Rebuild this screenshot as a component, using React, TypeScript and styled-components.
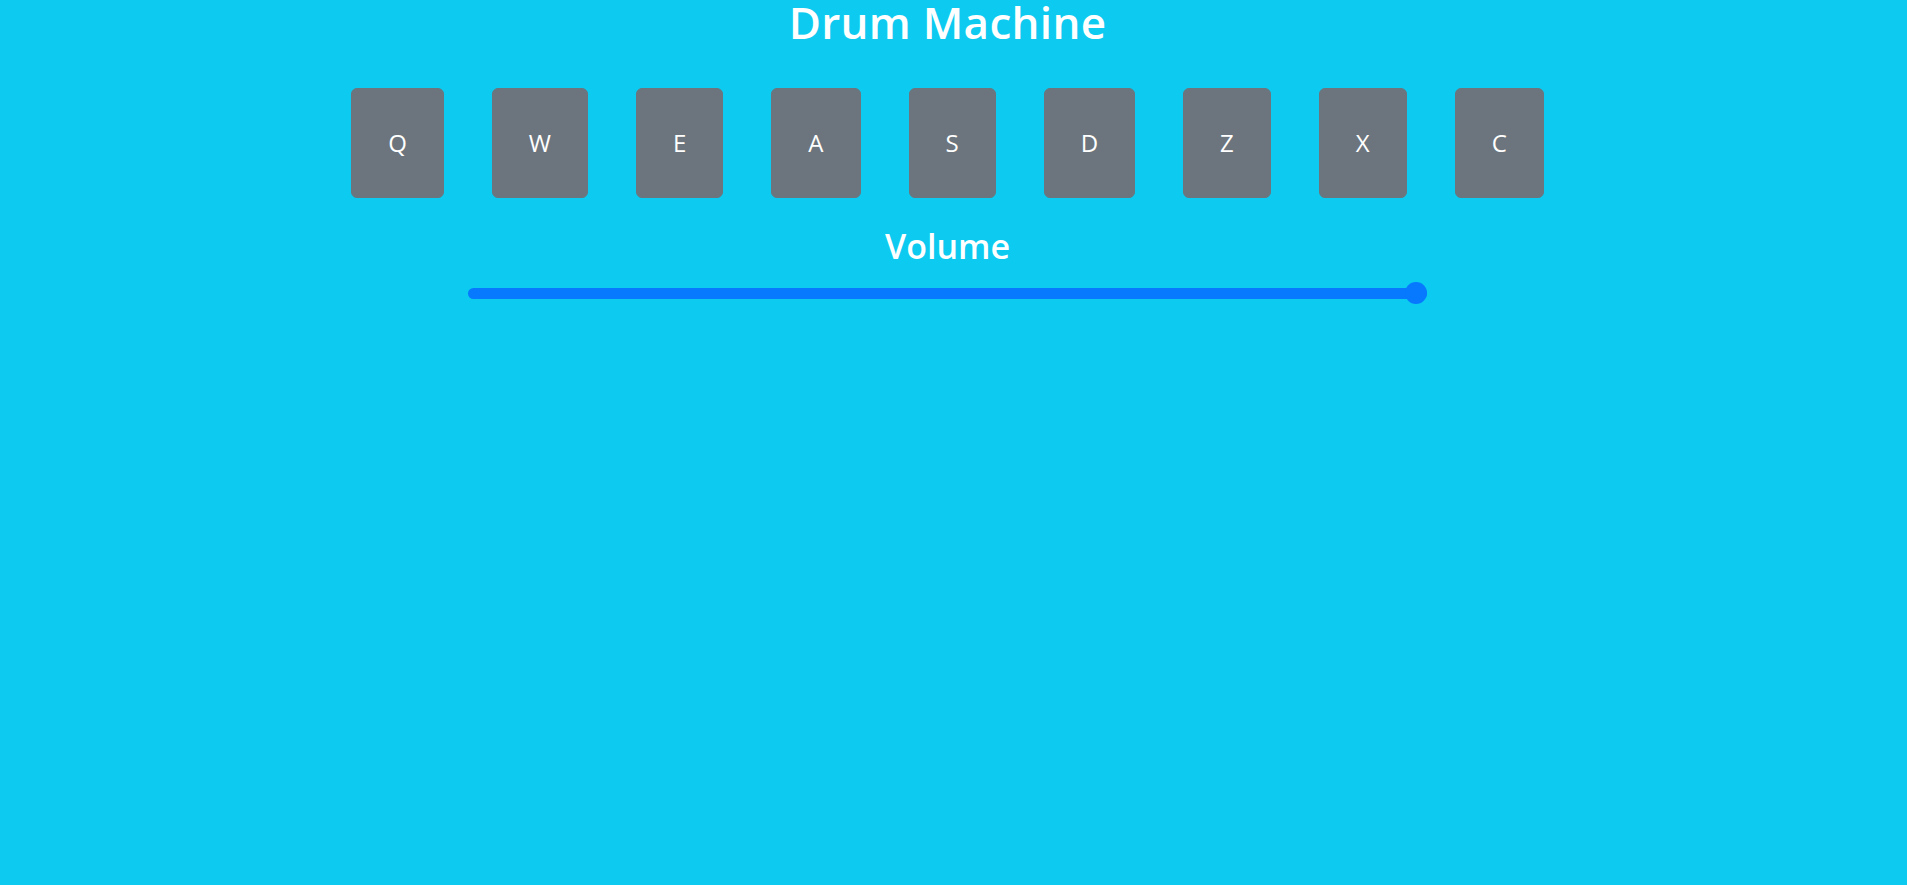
import React, { useState } from "react";
import styled, { createGlobalStyle } from "styled-components";

const GlobalStyle = createGlobalStyle`
  html, body {
    margin: 0;
    padding: 0;
    background: #0dcaf0;
    font-family: "Open Sans", "Noto Sans", sans-serif;
    color: #ffffff;
  }
  * { box-sizing: border-box; }
`;

const Page = styled.div`
  width: calc(100% - 12px);
  min-height: 885px;
  display: flex;
  flex-direction: column;
  align-items: center;
`;

const Title = styled.h1`
  margin: 0;
  font-size: 44px;
  font-weight: 600;
  line-height: 44px;
  letter-spacing: 0.3px;
  color: #ffffff;
  text-align: center;
`;

const PadRow = styled.div`
  display: flex;
  justify-content: center;
  gap: 48px;
  margin-top: 44px;
`;

const Pad = styled.button`
  padding: 36px;
  border: 1px solid #6c757d;
  border-radius: 6px;
  background: #6c757d;
  color: #ffffff;
  font-family: inherit;
  font-size: 24px;
  line-height: 36px;
  cursor: pointer;
`;

const VolumeLabel = styled.h3`
  margin: 28px 0 0;
  font-size: 34px;
  font-weight: 600;
  line-height: 40px;
  color: #ffffff;
`;

const Range = styled.input`
  -webkit-appearance: none;
  appearance: none;
  width: 959px;
  height: 22px;
  margin: 16px 0 0;
  background: transparent;
  outline: none;

  &::-webkit-slider-runnable-track {
    height: 11px;
    border-radius: 6px;
    background: #0779ff;
  }
  &::-webkit-slider-thumb {
    -webkit-appearance: none;
    appearance: none;
    width: 22px;
    height: 22px;
    margin-top: -5.5px;
    border-radius: 50%;
    background: #0779ff;
    border: none;
  }
`;

const keys = ["Q", "W", "E", "A", "S", "D", "Z", "X", "C"];

export default function App() {
  const [volume, setVolume] = useState(100);
  return (
    <>
      <GlobalStyle />
      <Page>
        <Title>Drum Machine</Title>
        <PadRow>
          {keys.map((k) => (
            <Pad key={k}>{k}</Pad>
          ))}
        </PadRow>
        <VolumeLabel>Volume</VolumeLabel>
        <Range
          type="range"
          min={0}
          max={100}
          value={volume}
          onChange={(e) => setVolume(Number(e.target.value))}
        />
      </Page>
    </>
  );
}
